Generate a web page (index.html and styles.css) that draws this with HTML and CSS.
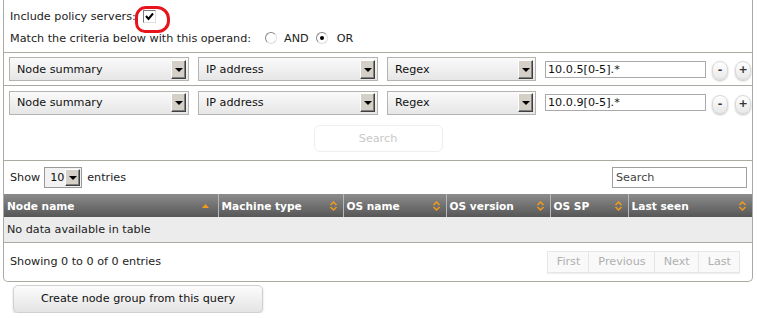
FILE: index.html
```html
<!DOCTYPE html>
<html lang="en">
<head>
  <meta charset="UTF-8" />
  <title>Node search</title>
  <link rel="stylesheet" href="styles.css">
</head>
<body>
  <div class="panel">
    <div class="options">
      <div class="opt-line">
        <span>Include policy servers:</span>
        <span class="check">
          <svg width="9" height="9" viewBox="0 0 9 9"><path d="M1 4 L3.5 7 L8 1.5" fill="none" stroke="#000" stroke-width="2"/></svg>
          <span class="note"></span>
        </span>
      </div>
      <div class="opt-line">
        <span>Match the criteria below with this operand:</span>
        <span class="radio"></span><span class="radio-label">AND</span>
        <span class="radio on"></span><span class="radio-label">OR</span>
      </div>
    </div>

    <div class="criteria">
      <div class="crit-row">
        <div class="select wide"><span>Node summary</span><i class="arrow"></i></div>
        <div class="select wide"><span>IP address</span><i class="arrow"></i></div>
        <div class="select narrow"><span>Regex</span><i class="arrow"></i></div>
        <div class="text-input">10.0.5[0-5].*</div>
        <div class="pill">-</div>
        <div class="pill">+</div>
      </div>
      <div class="crit-row">
        <div class="select wide"><span>Node summary</span><i class="arrow"></i></div>
        <div class="select wide"><span>IP address</span><i class="arrow"></i></div>
        <div class="select narrow"><span>Regex</span><i class="arrow"></i></div>
        <div class="text-input">10.0.9[0-5].*</div>
        <div class="pill">-</div>
        <div class="pill">+</div>
      </div>
    </div>

    <div class="search-bar">
      <div class="search-btn">Search</div>
    </div>

    <div class="results">
      <div class="dt-top">
        <div class="length"><span>Show</span><div class="select small"><span>10</span><i class="arrow"></i></div><span>entries</span></div>
        <div class="filter">Search</div>
      </div>

      <table class="dt">
        <thead>
          <tr>
            <th class="c1">Node name <svg class="sort" width="9" height="8" viewBox="0 0 9 8"><path d="M1 6 L4.5 2 L8 6 Z" fill="#f39a1c"/></svg></th>
            <th class="c2">Machine type <svg class="sort" width="9" height="12" viewBox="0 0 9 12"><path d="M1.5 5 L4.5 2 L7.5 5 M1.5 7 L4.5 10 L7.5 7" fill="none" stroke="#f39a1c" stroke-width="1.5"/></svg></th>
            <th class="c3">OS name <svg class="sort" width="9" height="12" viewBox="0 0 9 12"><path d="M1.5 5 L4.5 2 L7.5 5 M1.5 7 L4.5 10 L7.5 7" fill="none" stroke="#f39a1c" stroke-width="1.5"/></svg></th>
            <th class="c4">OS version <svg class="sort" width="9" height="12" viewBox="0 0 9 12"><path d="M1.5 5 L4.5 2 L7.5 5 M1.5 7 L4.5 10 L7.5 7" fill="none" stroke="#f39a1c" stroke-width="1.5"/></svg></th>
            <th class="c5">OS SP <svg class="sort" width="9" height="12" viewBox="0 0 9 12"><path d="M1.5 5 L4.5 2 L7.5 5 M1.5 7 L4.5 10 L7.5 7" fill="none" stroke="#f39a1c" stroke-width="1.5"/></svg></th>
            <th class="c6">Last seen <svg class="sort" width="9" height="12" viewBox="0 0 9 12"><path d="M1.5 5 L4.5 2 L7.5 5 M1.5 7 L4.5 10 L7.5 7" fill="none" stroke="#f39a1c" stroke-width="1.5"/></svg></th>
          </tr>
        </thead>
        <tbody>
          <tr><td colspan="6">No data available in table</td></tr>
        </tbody>
      </table>

      <div class="dt-bottom">
        <div class="info">Showing 0 to 0 of 0 entries</div>
        <div class="paging">
          <span class="pg">First</span><span class="pg">Previous</span><span class="pg">Next</span><span class="pg">Last</span>
        </div>
      </div>
    </div>
  </div>

  <div class="create">Create node group from this query</div>
</body>
</html>
```

FILE: styles.css
```css
:root {
  --line: #aaa9a2;
  --text: #222;
  --orange: #f39a1c;
}
* {
  box-sizing: border-box;
}
body {
  margin: 0;
  padding: 0 5px 0 3px;
  font-family: "DejaVu Sans", sans-serif;
  font-size: 11.2px;
  color: var(--text);
  background: #fff;
}
.panel {
  width: 750px;
  height: 282px;
  border: 1px solid var(--line);
  border-top: none;
  border-radius: 0 0 5px 5px;
}
.options {
  height: 53px;
  padding: 5px 6px 0;
  border-bottom: 1px solid var(--line);
}
.opt-line {
  display: flex;
  align-items: center;
  height: 22px;
}
.check {
  position: relative;
  display: inline-flex;
  align-items: center;
  justify-content: center;
  width: 13px;
  height: 13px;
  margin-left: 7px;
  border: 1px solid #7a7a7a;
  border-right-color: #ddd;
  border-bottom-color: #ddd;
  background: #fff;
}
.note {
  position: absolute;
  left: -9px;
  top: -5px;
  width: 35px;
  height: 27px;
  border: 3px solid #e8141c;
  border-radius: 11px 13px 12px 10px;
}
.radio {
  display: inline-block;
  width: 12px;
  height: 12px;
  margin-left: 14px;
  border-radius: 50%;
  border: 1px solid #888;
  border-right-color: #ddd;
  border-bottom-color: #ddd;
  background: #fff;
  position: relative;
}
.radio.on {
  margin-left: 7px;
}
.radio-label {
  margin-left: 7px;
}
.radio.on + .radio-label {
  margin-left: 9px;
}
.radio.on::after {
  content: "";
  position: absolute;
  left: 3px;
  top: 3px;
  width: 4px;
  height: 4px;
  border-radius: 50%;
  background: #000;
}
.crit-row {
  display: flex;
  align-items: center;
  height: 33px;
  padding-left: 5px;
}
.crit-row:first-child {
  border-bottom: 1px solid var(--line);
}
.select {
  display: flex;
  align-items: center;
  justify-content: space-between;
  height: 24px;
  padding: 0 2px 0 7px;
  border: 1px solid #b5b5b0;
  background: linear-gradient(#fafafa, #e6e6e6);
  color: #111;
}
.select.wide {
  width: 180px;
  margin-right: 9px;
}
.select.narrow {
  width: 149px;
  margin-right: 9px;
}
.arrow {
  position: relative;
  width: 15px;
  height: 19px;
  background: #d4d0c8;
  border: 1px solid;
  border-color: #fff #404040 #404040 #fff;
  box-shadow: inset -1px -1px 0 #808080;
}
.arrow::after {
  content: "";
  position: absolute;
  left: 3px;
  top: 7px;
  border-left: 4px solid transparent;
  border-right: 4px solid transparent;
  border-top: 4px solid #000;
}
.text-input {
  width: 161px;
  height: 17px;
  padding: 0 2px;
  line-height: 15px;
  border: 1px solid #a9a9a9;
  color: #111;
  margin-right: 6px;
}
.pill {
  width: 16px;
  height: 19px;
  margin-right: 7px;
  margin-top: 3px;
  border-radius: 8px;
  border: 1px solid #d8d8d8;
  background: linear-gradient(#fff, #e8e8e8);
  box-shadow: 0 1px 2px rgba(0, 0, 0, 0.25);
  text-align: center;
  line-height: 16px;
  font-size: 11px;
  font-weight: bold;
  color: #333;
}
.pill:last-child {
  margin-right: 0;
}
.search-bar {
  height: 42px;
  padding-top: 6px;
  display: flex;
  justify-content: center;
  border-bottom: 1px solid var(--line);
}
.search-btn {
  width: 129px;
  height: 27px;
  line-height: 25px;
  text-align: center;
  border: 1px solid #eee;
  border-radius: 6px;
  color: #c8c8c8;
  background: #fff;
}
.dt-top {
  display: flex;
  align-items: center;
  justify-content: space-between;
  height: 33px;
  padding: 0 5px 0 6px;
}
.length {
  display: flex;
  align-items: center;
}
.select.small {
  width: 38px;
  height: 21px;
  padding: 0 1px 0 5px;
  margin: 0 5px 0 4px;
  background: #f2f2f2;
  border-color: #999;
}
.select.small .arrow {
  width: 15px;
  height: 17px;
}
.select.small .arrow::after {
  top: 6px;
}
.filter {
  width: 135px;
  height: 21px;
  line-height: 19px;
  padding: 0 3px;
  border: 1px solid #a0a0a0;
  color: #444;
}
.dt {
  width: 100%;
  border-collapse: collapse;
  table-layout: fixed;
}
.dt th {
  height: 23px;
  padding: 0 3px;
  text-align: left;
  font-size: 10.6px;
  font-weight: bold;
  color: #fff;
  background: linear-gradient(#8c8c8c, #565656);
  border-left: 1px solid #b8b8b8;
  white-space: nowrap;
  position: relative;
}
.dt th:first-child {
  border-left: none;
}
.sort {
  position: absolute;
  right: 5px;
  top: 6px;
}
.c1 .sort {
  top: 8px;
  right: 8px;
}
.c1 { width: 214px; }
.c2 { width: 125px; }
.c3 { width: 103px; }
.c4 { width: 104px; }
.c5 { width: 78px; }
.dt td {
  height: 25px;
  padding: 0 3px;
  background: #ececec;
  border-bottom: 1px solid var(--line);
}
.dt-bottom {
  display: flex;
  align-items: center;
  justify-content: space-between;
  height: 38px;
  padding: 0 12px 0 6px;
}
.paging {
  display: flex;
  height: 22px;
  border: 1px solid #e6e6e6;
  box-shadow: 0 1px 1px rgba(0, 0, 0, 0.06);
}
.pg {
  padding: 0 8px 0 9px;
  line-height: 20px;
  color: #b0b0b0;
  background: #f9f9f9;
  border-left: 1px solid #e6e6e6;
}
.pg:first-child {
  border-left: none;
}
.create {
  width: 250px;
  height: 28px;
  margin: 3px 0 0 10px;
  line-height: 26px;
  text-align: center;
  border: 1px solid #d0d0d0;
  border-radius: 5px;
  background: linear-gradient(#fcfcfc, #e4e4e4);
  box-shadow: 0 1px 2px rgba(0, 0, 0, 0.2);
  color: #111;
}
```
